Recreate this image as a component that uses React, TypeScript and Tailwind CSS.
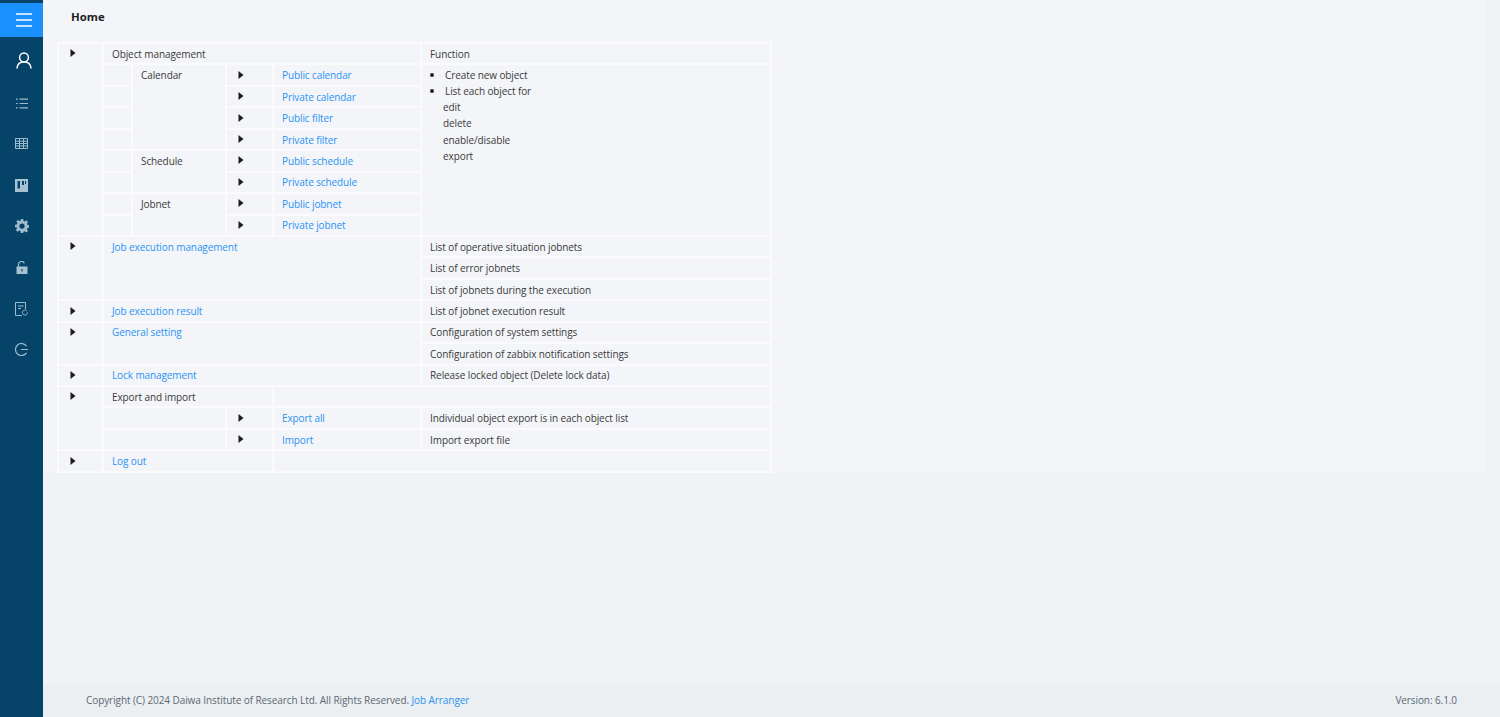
const font = "font-['Open_Sans','Noto_Sans',sans-serif]";
const td = "border-2 border-[#fbfbfc] px-2 pt-[2.8px] pb-0 align-top text-[10px] tracking-[-0.1px] leading-[15px] text-[#3a3a3a]";

function Arrow() {
  return (
    <svg width="6" height="8" viewBox="0 0 6 8" className="ml-[3px] mt-[2.5px] block">
      <path d="M0.5 0 L5.5 4 L0.5 8 Z" fill="#1c1c1c" />
    </svg>
  );
}

function A({ children }: { children: React.ReactNode }) {
  return <a className="text-[#2a93f5]">{children}</a>;
}

function ArrowCell({ rowSpan }: { rowSpan?: number }) {
  return (
    <td rowSpan={rowSpan} className={td}>
      <Arrow />
    </td>
  );
}

function SubRow({ name, span, link, first }: { name?: string; span?: number; link: string; first?: React.ReactNode }) {
  return (
    <tr className="h-[21.45px]">
      <td className={td}></td>
      {name ? (
        <td rowSpan={span} className={td}>
          {name}
        </td>
      ) : null}
      <ArrowCell />
      <td className={td}>
        <A>{link}</A>
      </td>
      {first}
    </tr>
  );
}

const stroke = { fill: "none", stroke: "#9dbbcd", strokeWidth: 1.2 };

const icons: React.ReactNode[] = [
  <svg key="u" width="16" height="17" viewBox="0 0 16 17" fill="none" stroke="#ffffff" strokeWidth="1.5" className="ml-[4px]">
    <circle cx="8" cy="5.5" r="4.4" />
    <path d="M.9 16.5c.3-4.2 3.2-6.5 7.1-6.5s6.8 2.3 7.1 6.5" />
  </svg>,
  <svg key="l" width="12" height="11" viewBox="0 0 12 11" {...stroke} className="mt-[2px]">
    <path d="M3.5 1.2H12M3.5 5.5H12M3.5 9.8H12M0 1.2h1.7M0 5.5h1.7M0 9.8h1.7" />
  </svg>,
  <svg key="t" width="13" height="11" viewBox="0 0 13 11" {...stroke} strokeWidth="1">
    <path d="M.5.5h12v10H.5zM.5 3.2h12M.5 5.5h12M.5 7.9h12M4.5.5v10M8.5.5v10" />
  </svg>,
  <svg key="k" width="13" height="13" viewBox="0 0 13 13">
    <path d="M0 0h13v13H0z M2.5 2v7.5h2.5V2z M7 2v4h2V2z M10 2v3h1V2z" fill="#a6c1d1" fillRule="evenodd" />
  </svg>,
  <svg key="g" width="14" height="14" viewBox="0 0 24 24" className="-mt-px">
    <path
      fill="#9dbbcd"
      fillRule="evenodd"
      d="M10 0h4l.7 3.4 2 .8 2.9-1.9 2.8 2.8-1.9 2.9.8 2 3.4.7v4l-3.4.7-.8 2 1.9 2.9-2.8 2.8-2.9-1.9-2 .8L14 24h-4l-.7-3.4-2-.8-2.9 1.9-2.8-2.8 1.9-2.9-.8-2L0 14v-4l3.4-.7.8-2-1.9-2.9 2.8-2.8 2.9 1.9 2-.8zM12 7.5a4.5 4.5 0 1 0 0 9 4.5 4.5 0 0 0 0-9z"
    />
  </svg>,
  <svg key="lk" width="12" height="13" viewBox="0 0 12 13" className="-mt-[2px]">
    <path d="M2.5 6V3.3a3 3 0 0 1 5.8-1" fill="none" stroke="#9dbbcd" strokeWidth="1.2" />
    <path d="M.5 5.5h11V13H.5z M5.4 8v2.5h1.2V8z" fill="#a6c1d1" fillRule="evenodd" />
  </svg>,
  <svg key="r" width="13" height="14" viewBox="0 0 13 14" {...stroke} strokeWidth="1" className="-mt-px">
    <path d="M7 13.5H.5V.5h10v6.5M3 4h5.5M3 6.5h3" />
    <path d="M12.5 10.5a2.5 2.5 0 1 1-.8-1.8" />
  </svg>,
  <svg key="o" width="13" height="13" viewBox="0 0 13 13" {...stroke} className="-mt-[4px]">
    <path d="M11.5 3.2A6 6 0 1 0 11.5 9.8M6 6.5h7" />
  </svg>,
];

export default function App() {
  return (
    <div className={`${font} flex h-[717px] w-[1500px] overflow-hidden bg-[#f0f2f5]`}>
      <aside className="flex w-[43px] shrink-0 flex-col items-center bg-[#054468]">
        <div className="mt-[3px] flex h-[34px] w-full items-center justify-center bg-[#1890ff]">
          <svg width="16" height="14" viewBox="0 0 16 14" stroke="#ffffff" strokeWidth="1.3" className="ml-[4px]">
            <path d="M0 1h16M0 7h16M0 13h16" />
          </svg>
        </div>
        <div className="flex w-full flex-col pt-[3px]">
          {icons.map((ic, i) => (
            <div key={i} className="flex h-[41.5px] items-center justify-center">
              {ic}
            </div>
          ))}
        </div>
      </aside>
      <div className="flex min-w-0 flex-1 flex-col">
        <div className="mr-[15px] bg-[#f4f5f8]">
          <header className="flex h-[34px] items-center pl-[28px] text-[11.4px] font-bold text-[#222222]">Home</header>
          <div className="pb-0 pl-[14px] pt-[8px]">
            <table className="w-[713px] table-fixed border-collapse">
              <colgroup>
                <col className="w-[45px]" />
                <col className="w-[29px]" />
                <col className="w-[94px]" />
                <col className="w-[47px]" />
                <col className="w-[148px]" />
                <col className="w-[350px]" />
              </colgroup>
              <tbody>
                <tr className="h-[21.45px]">
                  <ArrowCell rowSpan={9} />
                  <td colSpan={4} className={td}>
                    Object management
                  </td>
                  <td className={td}>Function</td>
                </tr>
                <SubRow
                  name="Calendar"
                  span={4}
                  link="Public calendar"
                  first={
                    <td rowSpan={8} className={td}>
                      <ul className="-mt-px">
                        <li className="flex items-center gap-[11px] leading-[16px]">
                          <span className="h-[4px] w-[4px] rounded-full bg-[#222222]"></span>Create new object
                        </li>
                        <li className="flex items-center gap-[11px] leading-[16px]">
                          <span className="h-[4px] w-[4px] rounded-full bg-[#222222]"></span>List each object for
                        </li>
                      </ul>
                      <div className="pl-[13px] leading-[16.2px]">
                        <div>edit</div>
                        <div>delete</div>
                        <div>enable/disable</div>
                        <div>export</div>
                      </div>
                    </td>
                  }
                />
                <SubRow link="Private calendar" />
                <SubRow link="Public filter" />
                <SubRow link="Private filter" />
                <SubRow name="Schedule" span={2} link="Public schedule" />
                <SubRow link="Private schedule" />
                <SubRow name="Jobnet" span={2} link="Public jobnet" />
                <SubRow link="Private jobnet" />

                <tr className="h-[21.45px]">
                  <ArrowCell rowSpan={3} />
                  <td colSpan={4} rowSpan={3} className={td}>
                    <A>Job execution management</A>
                  </td>
                  <td className={td}>List of operative situation jobnets</td>
                </tr>
                <tr className="h-[21.45px]">
                  <td className={td}>List of error jobnets</td>
                </tr>
                <tr className="h-[21.45px]">
                  <td className={td}>List of jobnets during the execution</td>
                </tr>

                <tr className="h-[21.45px]">
                  <ArrowCell />
                  <td colSpan={4} className={td}>
                    <A>Job execution result</A>
                  </td>
                  <td className={td}>List of jobnet execution result</td>
                </tr>

                <tr className="h-[21.45px]">
                  <ArrowCell rowSpan={2} />
                  <td colSpan={4} rowSpan={2} className={td}>
                    <A>General setting</A>
                  </td>
                  <td className={td}>Configuration of system settings</td>
                </tr>
                <tr className="h-[21.45px]">
                  <td className={td}>Configuration of zabbix notification settings</td>
                </tr>

                <tr className="h-[21.45px]">
                  <ArrowCell />
                  <td colSpan={4} className={td}>
                    <A>Lock management</A>
                  </td>
                  <td className={td}>Release locked object (Delete lock data)</td>
                </tr>

                <tr className="h-[21.45px]">
                  <ArrowCell rowSpan={3} />
                  <td colSpan={3} className={td}>
                    Export and import
                  </td>
                  <td colSpan={2} className={td}></td>
                </tr>
                <tr className="h-[21.45px]">
                  <td colSpan={2} className={td}></td>
                  <ArrowCell />
                  <td className={td}>
                    <A>Export all</A>
                  </td>
                  <td className={td}>Individual object export is in each object list</td>
                </tr>
                <tr className="h-[21.45px]">
                  <td colSpan={2} className={td}></td>
                  <ArrowCell />
                  <td className={td}>
                    <A>Import</A>
                  </td>
                  <td className={td}>Import export file</td>
                </tr>

                <tr className="h-[21.45px]">
                  <ArrowCell />
                  <td colSpan={3} className={td}>
                    <A>Log out</A>
                  </td>
                  <td colSpan={2} className={td}></td>
                </tr>
              </tbody>
            </table>
          </div>
        </div>
        <div className="flex-1" />
        <footer className="flex h-[33px] items-center justify-between bg-[#ebeff2] pl-[43px] pr-[43px] text-[10px] tracking-[-0.08px] text-[#5c6873]">
          <span>
            Copyright (C) 2024 Daiwa Institute of Research Ltd. All Rights Reserved. <span className="text-[#2a93f5]">Job Arranger</span>
          </span>
          <span>Version: 6.1.0</span>
        </footer>
      </div>
    </div>
  );
}
